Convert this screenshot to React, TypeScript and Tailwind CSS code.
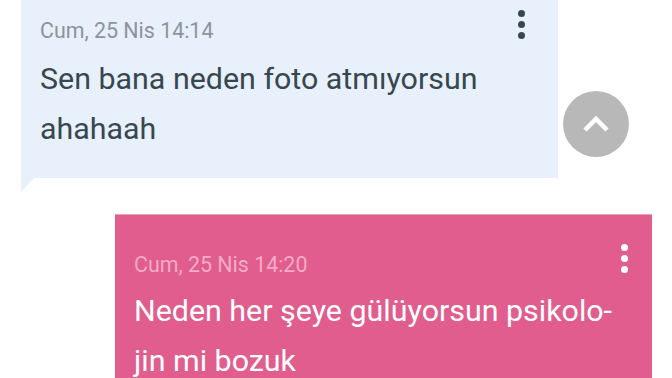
import React from "react";

const Kebab = ({ color }: { color: string }) => (
  <div className="flex flex-col items-center gap-[4px]">
    <span className={`block w-[7px] h-[7px] rounded-full ${color}`} />
    <span className={`block w-[7px] h-[7px] rounded-full ${color}`} />
    <span className={`block w-[7px] h-[7px] rounded-full ${color}`} />
  </div>
);

export default function App() {
  return (
    <div
      className="relative w-[672px] h-[378px] overflow-hidden bg-white"
      style={{ fontFamily: "Roboto, 'Noto Sans', sans-serif" }}
    >
      {/* received message */}
      <div className="ml-[21px] w-[537px] -mt-[20px]">
        <div className="flex bg-[#e8f0fb] h-[198px]">
          <div className="flex-1 pl-[19px] pt-[39px]">
            <div className="text-[21.4px] leading-[24px] text-[#8d949b]">Cum, 25 Nis 14:14</div>
            <div className="mt-[11px] text-[30.4px] leading-[50px] text-[#37474f]">
              Sen bana neden foto atmıyorsun
              <br />
              ahahaah
            </div>
          </div>
          <div className="pt-[30px] pr-[33px]">
            <Kebab color="bg-[#37474f]" />
          </div>
        </div>
        <div className="w-0 h-0 border-t-[14px] border-t-[#e8f0fb] border-r-[13px] border-r-transparent" />
      </div>

      {/* scroll-to-top button */}
      <div className="absolute left-[563px] top-[91px] w-[66px] h-[66px] rounded-full bg-[#b8b8b8] flex items-center justify-center">
        <svg width="30" height="20" viewBox="0 0 30 20" fill="none">
          <path d="M4 16 L15 5 L26 16" stroke="white" strokeWidth="4.5" strokeLinecap="butt" strokeLinejoin="miter" />
        </svg>
      </div>

      {/* sent message */}
      <div className="ml-[115px] mt-[22px] w-[537px] flex bg-[#e05d8d] h-[200px] border-t border-t-[#eaa0bd]">
        <div className="flex-1 pl-[19px] pt-[38px]">
          <div className="text-[21.4px] leading-[24px] text-[#f5abc7]">Cum, 25 Nis 14:20</div>
          <div className="mt-[9px] text-[30.4px] leading-[50px] text-white">
            Neden her şeye gülüyorsun psikolo-
            <br />
            jin mi bozuk
          </div>
        </div>
        <div className="pt-[29px] pr-[24px]">
          <Kebab color="bg-white" />
        </div>
      </div>
    </div>
  );
}
